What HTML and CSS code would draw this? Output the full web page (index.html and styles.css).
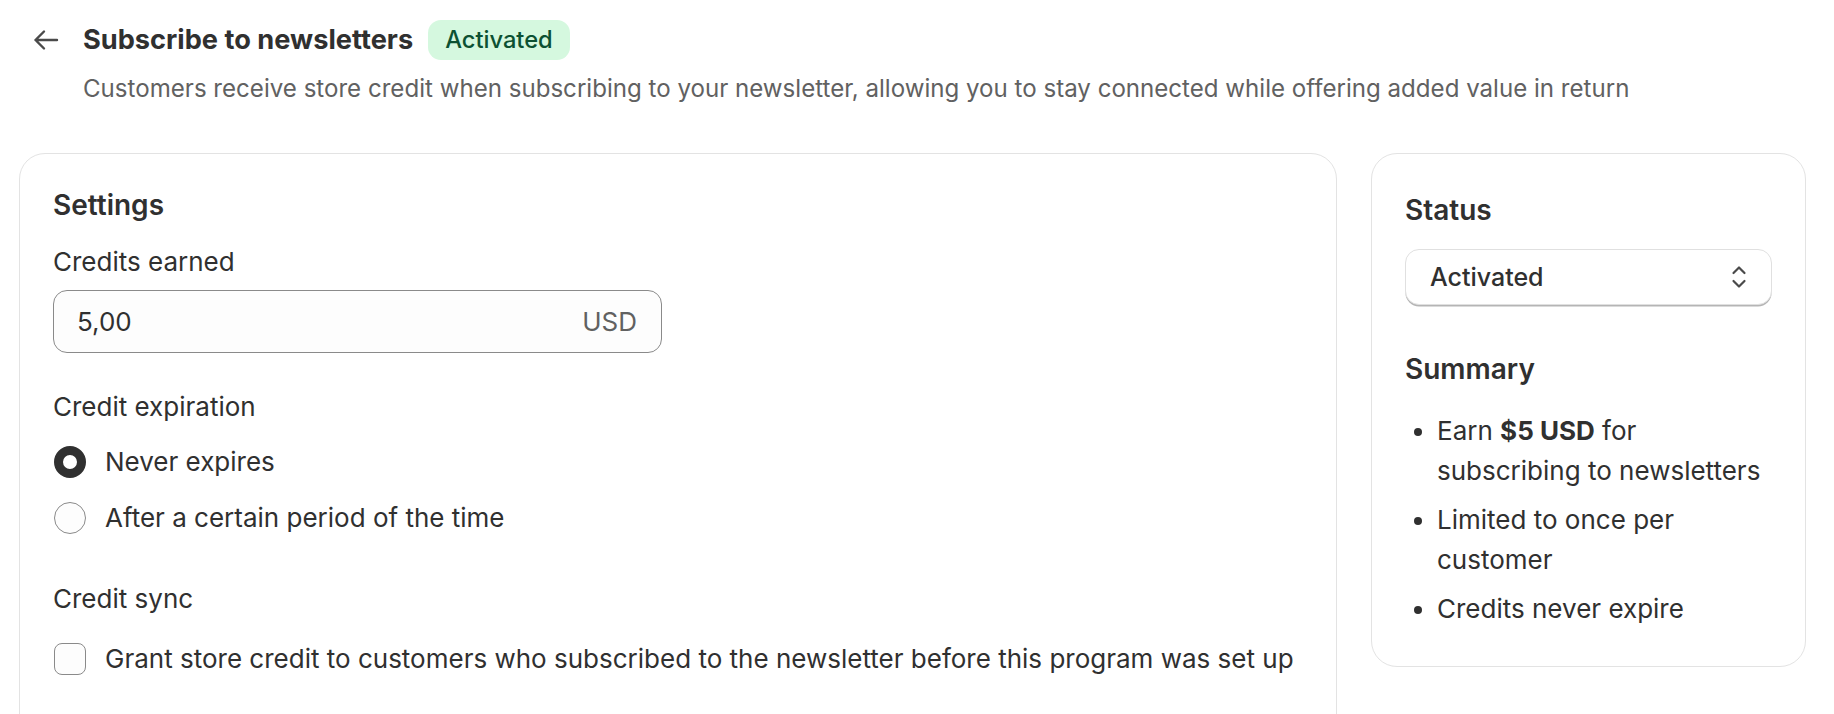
FILE: index.html
```html
<!DOCTYPE html>
<html lang="en">
<head>
<meta charset="utf-8">
<title>Subscribe to newsletters</title>
<link rel="stylesheet" href="styles.css">
</head>
<body>
<div class="page">
  <header class="page-header">
    <div class="title-row">
      <button class="back" aria-label="Back">
        <svg width="26" height="26" viewBox="0 0 26 26" fill="none" stroke="#4a4a4a" stroke-width="2.4" stroke-linecap="round" stroke-linejoin="round"><path d="M24 13H2.5M11 4.5L2.5 13L11 21.5"/></svg>
      </button>
      <h1 class="title">Subscribe to newsletters</h1>
      <span class="badge">Activated</span>
    </div>
    <p class="subtitle">Customers receive store credit when subscribing to your newsletter, allowing you to stay connected while offering added value in return</p>
  </header>

  <div class="layout">
    <section class="card settings">
      <h2 class="card-title">Settings</h2>
      <div class="label label-first">Credits earned</div>
      <div class="text-field">
        <span class="field-value">5,00</span>
        <span class="field-suffix">USD</span>
      </div>

      <div class="label label-exp">Credit expiration</div>
      <div class="choice choice-first">
        <span class="radio checked"></span>
        <span class="choice-text">Never expires</span>
      </div>
      <div class="choice choice-second">
        <span class="radio"></span>
        <span class="choice-text">After a certain period of the time</span>
      </div>

      <div class="label label-sync">Credit sync</div>
      <div class="choice choice-check">
        <span class="checkbox"></span>
        <span class="choice-text">Grant store credit to customers who subscribed to the newsletter before this program was set up</span>
      </div>
    </section>

    <aside class="card status">
      <h2 class="card-title">Status</h2>
      <div class="select">
        <span class="select-value">Activated</span>
        <svg class="select-icon" width="16" height="24" viewBox="0 0 16 24" fill="none" stroke="#4a4a4a" stroke-width="2.2" stroke-linecap="round" stroke-linejoin="round"><path d="M2.5 8L8 2.5L13.5 8M2.5 16L8 21.5L13.5 16"/></svg>
      </div>
      <h2 class="card-title summary-title">Summary</h2>
      <ul class="summary">
        <li>Earn <strong>$5 USD</strong> for subscribing to newsletters</li>
        <li>Limited to once per customer</li>
        <li>Credits never expire</li>
      </ul>
    </aside>
  </div>
</div>
</body>
</html>
```

FILE: styles.css
```css
* { box-sizing: border-box; }

html, body {
  margin: 0;
  padding: 0;
  background: #ffffff;
}

body {
  font-family: Inter, "Noto Sans", "Liberation Sans", sans-serif;
  color: #303030;
  font-size: 26px;
  line-height: 36px;
}

.page {
  padding: 20px 28px 0 19px;
}

.page-header {
  padding-left: 14px;
}

.title-row {
  display: flex;
  align-items: center;
  height: 40px;
}

.back {
  display: flex;
  align-items: center;
  justify-content: center;
  width: 26px;
  height: 26px;
  padding: 0;
  margin: 0 24px 0 0;
  border: 0;
  background: none;
}

.title {
  margin: 0;
  font-size: 27.2px;
  line-height: 40px;
  font-weight: 700;
}

.badge {
  margin-left: 15px;
  height: 40px;
  padding: 0 17px;
  display: inline-flex;
  align-items: center;
  border-radius: 13px;
  background: #d5f8df;
  color: #0c5132;
  font-size: 23.7px;
  font-weight: 500;
}

.subtitle {
  margin: 11px 0 0 50px;
  color: #616161;
  font-size: 24.1px;
  line-height: 36px;
}

.layout {
  display: flex;
  align-items: flex-start;
  gap: 34px;
  margin-top: 46px;
}

.card {
  background: #ffffff;
  border: 1.5px solid #e3e3e3;
  border-radius: 26px;
}

.settings {
  width: 1318px;
  padding: 35px 33px 60px;
}

.status {
  width: 435px;
  padding: 40px 33px 37px;
}

.card-title {
  margin: 0;
  font-size: 28px;
  line-height: 32px;
  font-weight: 600;
}

.label {
  line-height: 36px;
}

.label-first { margin-top: 23px; }
.label-exp { margin-top: 36px; }
.label-sync { margin-top: 43px; }

.text-field {
  margin-top: 10px;
  width: 609px;
  height: 63px;
  display: flex;
  align-items: center;
  justify-content: space-between;
  padding: 0 24px 0 23px;
  border: 1.5px solid #8a8a8a;
  border-radius: 14px;
  background: #fdfdfd;
}

.field-suffix {
  color: #616161;
}

.choice {
  display: flex;
  align-items: center;
  gap: 19px;
  height: 40px;
  padding-left: 1px;
}

.choice-first { margin-top: 17px; }
.choice-second { margin-top: 16px; }
.choice-check { margin-top: 22px; }

.radio {
  flex: none;
  width: 32px;
  height: 32px;
  border-radius: 50%;
  border: 1.5px solid #8a8a8a;
  background: #fdfdfd;
}

.radio.checked {
  border: 9.5px solid #303030;
  background: #ffffff;
}

.checkbox {
  flex: none;
  width: 32px;
  height: 32px;
  border-radius: 8px;
  border: 1.5px solid #8a8a8a;
  background: #fdfdfd;
}

.select {
  margin-top: 23px;
  height: 56px;
  display: flex;
  align-items: center;
  justify-content: space-between;
  padding: 0 24px;
  border: 1.5px solid #e0e0e0;
  border-radius: 14px;
  box-shadow: 0 2px 0 -0.5px #b5b5b5;
  background: #ffffff;
  font-size: 25px;
}

.select-value {
  font-weight: 500;
}

.summary-title { margin-top: 48px; }

.summary {
  margin: 26px 0 0;
  padding: 0 0 0 32px;
  line-height: 40px;
}

.summary li + li {
  margin-top: 9px;
}

.summary strong {
  font-weight: 700;
}
```
